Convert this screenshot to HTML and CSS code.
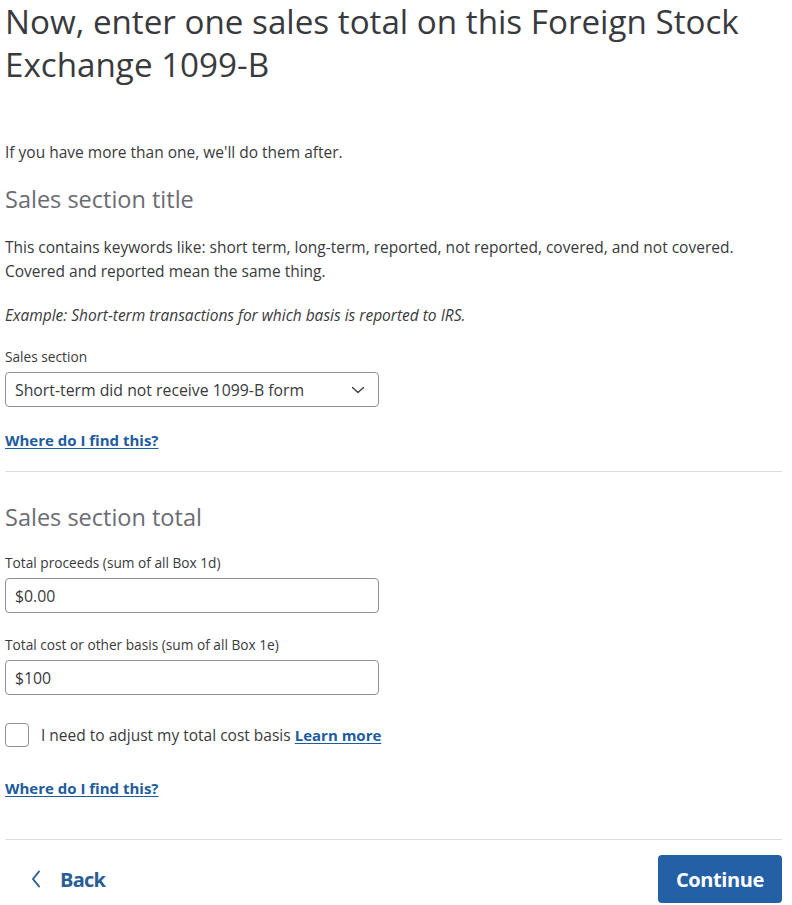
FILE: index.html
```html
<!DOCTYPE html>
<html>
<head>
<meta charset="utf-8">
<link rel="stylesheet" href="styles.css">
</head>
<body>
<main class="page">
  <h1 class="title">Now, enter one sales total on this Foreign Stock Exchange 1099-B</h1>
  <p class="intro">If you have more than one, we'll do them after.</p>
  <h2 class="subtitle">Sales section title</h2>
  <p class="body">This contains keywords like: short term, long-term, reported, not reported, covered, and not covered. Covered and reported mean the same thing.</p>
  <p class="body example">Example: Short-term transactions for which basis is reported to IRS.</p>
  <label class="label">Sales section</label>
  <div class="select">
    <span>Short-term did not receive 1099-B form</span>
    <svg class="chev" width="14" height="8" viewBox="0 0 14 8"><path d="M1.5 1.5 L7 6.5 L12.5 1.5" fill="none" stroke="#393a3d" stroke-width="1.3" stroke-linecap="round" stroke-linejoin="round"/></svg>
  </div>
  <a class="link first" href="#">Where do I find this?</a>
  <hr class="rule">
  <h2 class="subtitle second">Sales section total</h2>
  <label class="label l2">Total proceeds (sum of all Box 1d)</label>
  <div class="input">$0.00</div>
  <label class="label l3">Total cost or other basis (sum of all Box 1e)</label>
  <div class="input">$100</div>
  <div class="check-row">
    <span class="box"></span>
    <span class="check-text">I need to adjust my total cost basis <a class="link inline" href="#">Learn more</a></span>
  </div>
  <a class="link last" href="#">Where do I find this?</a>
  <hr class="rule bottom">
  <div class="nav">
    <a class="back" href="#">
      <svg width="12" height="20" viewBox="0 0 12 20"><path d="M9 2.5 L3 10 L9 17.5" fill="none" stroke="#2a5d94" stroke-width="2" stroke-linecap="round" stroke-linejoin="round"/></svg>
      <span>Back</span>
    </a>
    <button class="continue">Continue</button>
  </div>
</main>
</body>
</html>
```
FILE: styles.css
```css
* { box-sizing: border-box; }
html, body { margin: 0; padding: 0; background: #fff; }
body {
  font-family: "Open Sans", "Noto Sans", sans-serif;
  color: #393a3d;
}
.page {
  padding: 0 10px 0 5px;
  display: flex;
  flex-direction: column;
  align-items: flex-start;
}
.title {
  margin: 0;
  font-size: 33.2px;
  font-weight: 400;
  line-height: 43px;
  color: #393a3d;
  max-width: 760px;
}
.intro {
  margin: 56px 0 0;
  font-size: 15.5px;
  line-height: 20px;
}
.subtitle {
  margin: 22px 0 0;
  font-size: 23.5px;
  font-weight: 400;
  line-height: 30px;
  color: #6b6c72;
}
.subtitle.second { margin-top: 30px; }
.body {
  margin: 21px 0 0;
  font-size: 15.5px;
  line-height: 24px;
  max-width: 770px;
}
.example { font-style: italic; margin-top: 20px; }
.label {
  margin-top: 21px;
  font-size: 13.7px;
  line-height: 18px;
}
.label.l2 { margin-top: 22px; }
.label.l3 { margin-top: 23px; }
.select, .input {
  margin-top: 6px;
  width: 374px;
  height: 35px;
  border: 1px solid #8d9096;
  border-radius: 4px;
  display: flex;
  align-items: center;
  padding: 0 10px 0 9px;
  font-size: 15.8px;
  color: #393a3d;
}
.select { justify-content: space-between; }
.chev { margin-right: 3px; }
.link {
  color: #1d5c9e;
  font-weight: 700;
  font-size: 15px;
  text-decoration: underline;
  text-underline-offset: 2px;
}
.link.first { margin-top: 23px; }
.link.last { margin-top: 31px; }
.link.inline { font-size: 15px; }
.rule {
  width: 777px;
  margin: 21px 0 0;
  border: 0;
  border-top: 1px solid #dcdcde;
}
.rule.bottom { margin-top: 41px; }
.check-row {
  margin-top: 28px;
  display: flex;
  align-items: center;
  gap: 12px;
}
.box {
  width: 24px;
  height: 24px;
  border: 1px solid #8d9096;
  border-radius: 4px;
}
.check-text { font-size: 15.5px; color: #393a3d; }
.nav {
  margin-top: 15px;
  width: 777px;
  display: flex;
  justify-content: space-between;
  align-items: center;
}
.back {
  display: flex;
  align-items: center;
  gap: 18px;
  padding-left: 25px;
  color: #2a5d94;
  text-decoration: none;
  font-weight: 700;
  font-size: 20px;
  letter-spacing: -0.8px;
}
.continue {
  width: 124px;
  height: 48px;
  border: 0;
  border-radius: 4px;
  background: #2460a6;
  color: #fff;
  font-weight: 700;
  font-size: 20px;
  letter-spacing: -0.4px;
  font-family: "Open Sans", sans-serif;
}
```
